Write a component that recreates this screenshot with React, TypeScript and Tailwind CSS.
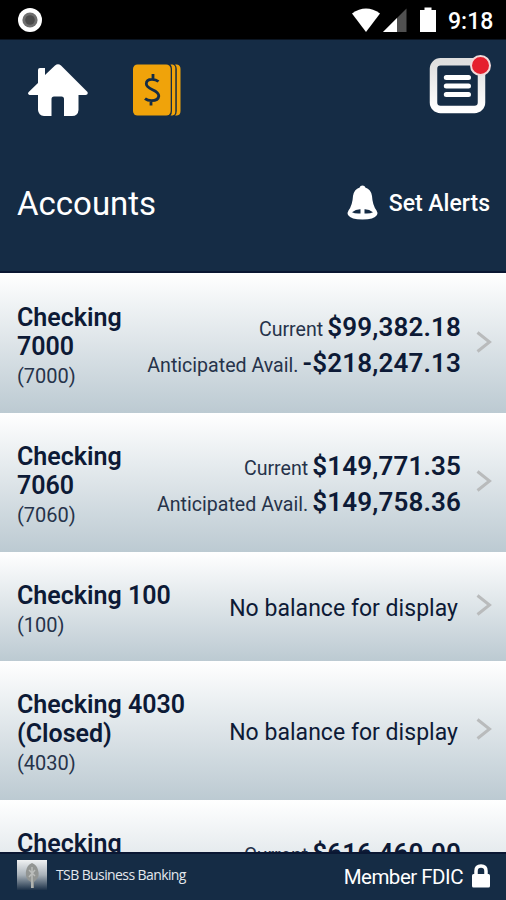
type Account = {
  name: string;
  number?: string;
  current?: string;
  available?: string;
  height: string;
};

const accounts: Account[] = [
  {
    name: "Checking 7000",
    number: "(7000)",
    current: "$99,382.18",
    available: "-$218,247.13",
    height: "h-[140px] pt-[1px]",
  },
  {
    name: "Checking 7060",
    number: "(7060)",
    current: "$149,771.35",
    available: "$149,758.36",
    height: "h-[139px]",
  },
  { name: "Checking 100", number: "(100)", height: "h-[109px]" },
  { name: "Checking 4030 (Closed)", number: "(4030)", height: "h-[139px]" },
  { name: "Checking", current: "$616,460.00", height: "h-[139px]" },
];

function StatusBar() {
  return (
    <div className="h-10 shrink-0 bg-black flex items-center justify-between pl-[18px] pr-[12px] border-b border-[#0b1522]">
      <svg width="24" height="24" viewBox="0 0 24 24">
        <circle cx="12" cy="12" r="12" fill="#fff" />
        <circle cx="12" cy="12" r="7.6" fill="#6f6f6f" />
        <circle cx="12" cy="12" r="4.8" fill="#4c4c4c" />
      </svg>

      <div className="flex items-center">
        <svg width="84" height="26" viewBox="0 0 84 26">
          <path d="M0 6.6 Q14 -3.6 28 6.6 L14 25 Z" fill="#fff" />
          <path d="M54.500 1.500 V25 H31 Z" fill="#505050" />
          <path d="M45 11 V25 H31 Z" fill="#fff" />
          <path d="M72.500 0.500 H79.500 V3 H84 V25 H68 V3 H72.500 Z" fill="#fff" />
        </svg>
        <span className="ml-[12px] mt-[4px] w-[46px] text-white text-[23px] leading-6 font-medium whitespace-nowrap">
          9:18
        </span>
      </div>
    </div>
  );
}

function HomeIcon() {
  return (
    <svg width="60" height="53" viewBox="0 0 60 53">
      <path
        d="M27 1.500 Q30 -0.800 33 1.500 L59.500 28 Q60.500 31 57.500 31 H50.500 V46 Q50 52 44 52 H36 V35 Q36 32.500 33.500 32.500 H26 Q23.500 32.500 23.500 35 V52 H16 Q10.500 51.500 10 46 V31 H1.500 Q-1 30 0.700 28 L10 19 V6 Q10 4 12 4 H17 V11 Z"
        fill="#fff"
      />
    </svg>
  );
}

function CheckbookIcon() {
  return (
    <svg width="48" height="52" viewBox="0 0 48 52">
      <path d="M37.500 0.500 H39.500 Q42.300 1 42.300 4 V48 Q42.300 51 39.500 51.500 H37.500 Q39 50 39 47 V5 Q39 2 37.500 0.500 Z" fill="#f0a30a" />
      <path d="M42 0.500 H44 Q47.500 1 47.500 5 V47 Q47.500 51 44 51.500 H42 Q43.800 50 43.800 47 V5 Q43.800 2 42 0.500 Z" fill="#f0a30a" />
      <rect x="0" y="0.500" width="37.700" height="51" rx="4.500" fill="#f0a30a" />
      <path
        d="M25.500 17.500 Q23 15.300 19 15.300 Q13.300 15.300 13.300 19.800 Q13.300 23 19.500 25.700 Q25.800 28.400 25.800 32 Q25.300 36.700 18.500 36.700 Q14.500 36.700 12 34.600 M20 10 V15 M18 36.500 V41.500"
        fill="none"
        stroke="#152c45"
        strokeWidth="2.800"
      />
    </svg>
  );
}

function MenuIcon() {
  return (
    <div className="relative w-[62px] h-[58px]">
      <svg width="62" height="58" viewBox="0 0 62 58">
        <defs>
          <linearGradient id="frame" x1="0" y1="0" x2="0" y2="1">
            <stop offset="0" stopColor="#dedede" />
            <stop offset="1" stopColor="#fff" />
          </linearGradient>
        </defs>
        <rect x="4.500" y="4.800" width="48" height="47.700" rx="7" fill="none" stroke="url(#frame)" strokeWidth="7.500" />
        <path d="M17.300 20.500 H39.500 M17.300 29 H39.500 M17.300 37.500 H39.500" stroke="#fff" strokeWidth="5" strokeLinecap="round" />
      </svg>
      <div className="absolute -top-[2px] right-0 w-[21px] h-[21px] rounded-full bg-[#e5202e] border-[2px] border-[#f2dada]" />
    </div>
  );
}

function BellIcon() {
  return (
    <svg width="31" height="35" viewBox="0 0 31 35">
      <path
        d="M15.500 0.500 Q18 0.500 18.300 2.600 Q24 4.500 25 11 Q25.500 20 29.500 25.500 Q31 27.500 30 30 Q27 34.500 15.500 34.500 Q4 34.500 1 30 Q0 27.500 1.500 25.500 Q5.500 20 6 11 Q7 4.500 12.700 2.600 Q13 0.500 15.500 0.500 Z"
        fill="#fff"
      />
      <path d="M5 27.200 Q9 24 13.500 24.200 V28.500 Q8 29 5 27.200 Z M26 27.200 Q22 24 17.500 24.200 V28.500 Q23 29 26 27.200 Z" fill="#152c45" />
    </svg>
  );
}

function Balance({ label, amount }: { label: string; amount: string }) {
  return (
    <div className="h-9 flex items-baseline justify-end gap-[4px]">
      <span className="text-[19.6px] leading-9 text-[#26334a]">{label}</span>
      <span className="text-[26px] leading-9 font-semibold tracking-[0.15px]">{amount}</span>
    </div>
  );
}

function AccountRow({ account }: { account: Account }) {
  return (
    <div
      className={`${account.height} shrink-0 flex items-start pl-[17px] pr-[14px] bg-linear-to-b from-white to-[#bccad2] text-[#0d1a36]`}
    >
      <div className={account.current ? "w-[125px] pt-[29px]" : "w-[190px] pt-[29px]"}>
        <h2 className="text-[25px] leading-[29px] font-semibold">{account.name}</h2>
        {account.number && (
          <p className="text-[20px] leading-[30px] text-[#26334a]">{account.number}</p>
        )}
      </div>

      {account.current ? (
        <div className="flex-1 pt-[35px] text-right whitespace-nowrap">
          <Balance label="Current" amount={account.current} />
          {account.available && (
            <Balance label="Anticipated Avail." amount={account.available} />
          )}
        </div>
      ) : (
        <p className="flex-1 self-center text-right text-[23px] leading-[28px] tracking-[0.03px] pr-[3px] pt-[5px] whitespace-nowrap">
          No balance for display
        </p>
      )}

      <svg className="self-center ml-[15px] mb-[3px] shrink-0" width="16" height="22" viewBox="0 0 16 22">
        <path d="M1.500 1.500 L13.500 11 L1.500 20.500" fill="none" stroke="#b9bbbc" strokeWidth="3" />
      </svg>
    </div>
  );
}

function Footer() {
  return (
    <div className="h-[48px] shrink-0 bg-[#152c45] border-t-2 border-[#0a1733] flex items-center justify-between pl-[17px] pr-[16px] text-white">
      <div className="flex items-center pb-[4px]">
        <svg width="30" height="30" viewBox="0 0 30 30">
          <defs>
            <linearGradient id="sky" x1="0" y1="0" x2="0" y2="1">
              <stop offset="0" stopColor="#f0f2f3" />
              <stop offset="0.500" stopColor="#a8b1b9" />
              <stop offset="1" stopColor="#1c3148" />
            </linearGradient>
          </defs>
          <rect width="30" height="30" fill="url(#sky)" />
          <path d="M15 3 Q20 5 21 10 Q23 16 19 20 L17 22 V28 H14 V22 L11 20 Q8 16 9 11 Q10 5 15 3 Z" fill="#929593" />
          <path d="M15 7 V28 M12 10 L18 16 M18 10 L12 17" stroke="#bbbdbb" strokeWidth="1.500" />
        </svg>
        <span className="ml-[9px] font-['Open_Sans'] font-medium text-[14px] leading-5 tracking-[-0.6px] text-[#e4e8ed] whitespace-nowrap">
          TSB Business Banking
        </span>
      </div>

      <div className="flex items-center">
        <span className="text-[20.5px] leading-6 tracking-[-0.5px] whitespace-nowrap">Member FDIC</span>
        <svg className="ml-[9px] mb-[3px]" width="18" height="24" viewBox="0 0 18 24">
          <path d="M4 11 V7 Q4 2 9 2 Q14 2 14 7 V11" fill="none" stroke="#fff" strokeWidth="3.500" />
          <rect y="10" width="18" height="13.500" rx="1.500" fill="#fff" />
        </svg>
      </div>
    </div>
  );
}

export default function App() {
  return (
    <div className="w-[506px] h-[900px] flex flex-col overflow-hidden bg-[#152c45] font-[Roboto,sans-serif]">
      <StatusBar />

      {/* Toolbar */}
      <div className="h-[94px] shrink-0 flex items-start pl-[28px] pr-[15px] pt-[17px]">
        <div className="pt-[7px]">
          <HomeIcon />
        </div>
        <div className="ml-[45px] pt-[7px]">
          <CheckbookIcon />
        </div>
        <div className="ml-auto">
          <MenuIcon />
        </div>
      </div>

      {/* Title */}
      <div className="h-[139px] shrink-0 flex items-center justify-between pl-[17px] pr-[16px] border-b-2 border-[#0a1733] text-white">
        <h1 className="text-[33px] leading-10 pt-[3px]">Accounts</h1>
        <button className="flex items-center text-[23px] font-medium">
          <BellIcon />
          <span className="ml-[11px] pt-[4px]">Set Alerts</span>
        </button>
      </div>

      {/* Accounts */}
      <div className="flex-1 min-h-0 flex flex-col overflow-hidden">
        {accounts.map((account, index) => (
          <AccountRow key={index} account={account} />
        ))}
      </div>

      <Footer />
    </div>
  );
}
